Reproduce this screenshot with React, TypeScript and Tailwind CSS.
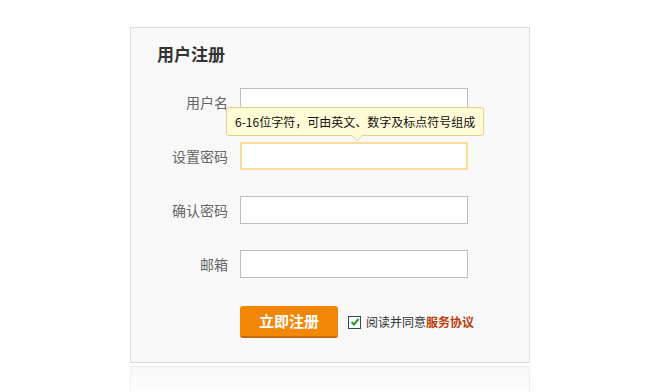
import React from "react";

const font = { fontFamily: '"Noto Sans CJK SC", "Noto Sans", sans-serif' };

function Row({ label, focused, children }: { label: string; focused?: boolean; children?: React.ReactNode }) {
  return (
    <div className="relative flex items-center h-[28px]">
      <div className="w-[97px] text-right text-[14px] text-[#666] leading-[28px]">{label}</div>
      <div
        className={
          focused
            ? "ml-[12px] w-[228px] h-[28px] bg-white border-2 border-[#fbdc97]"
            : "ml-[12px] w-[228px] h-[28px] bg-white border border-[#bdbdbd]"
        }
      />
      {children}
    </div>
  );
}

export default function App() {
  return (
    <div className="w-[650px] h-[392px] bg-white overflow-hidden" style={font}>
      <div className="pt-[27px] pl-[130px]">
        <div className="w-[400px] h-[336px] bg-[#f8f8f8] border border-[#dcdcdc] box-border">
          <div className="pl-[26px] pt-[14px] text-[17px] font-bold text-[#333] leading-[24px]">用户注册</div>
          <div className="mt-[22px] flex flex-col gap-[26px]">
            <Row label="用户名" />
            <Row label="设置密码" focused>
              <div className="absolute left-[95px] top-[-35px] z-10">
                <div className="relative h-[29px] px-[8px] flex items-center bg-[#fefbd6] border border-[#e3cf8c] rounded-[3px] text-[12px] text-[#111] whitespace-nowrap">
                  6-16位字符，可由英文、数字及标点符号组成
                  <div className="absolute left-[124px] bottom-[-6px] w-0 h-0 border-l-[6px] border-r-[6px] border-t-[6px] border-l-transparent border-r-transparent border-t-[#e3cf8c]" />
                  <div className="absolute left-[125px] bottom-[-5px] w-0 h-0 border-l-[5px] border-r-[5px] border-t-[5px] border-l-transparent border-r-transparent border-t-[#fefbd6]" />
                </div>
              </div>
            </Row>
            <Row label="确认密码" />
            <Row label="邮箱" />
          </div>
          <div className="mt-[28px] ml-[109px] flex items-center">
            <button className="w-[98px] h-[32px] rounded-[3px] bg-[#f28705] border-b-2 border-[#c7680a] text-white text-[15px] font-bold flex items-center justify-center">
              立即注册
            </button>
            <div className="ml-[10px] w-[13px] h-[13px] border border-[#2c4b5b] bg-white flex items-center justify-center">
              <svg width="10" height="10" viewBox="0 0 10 10">
                <path d="M1.5 5 L4 7.5 L8.5 2" fill="none" stroke="#2a9a2a" strokeWidth="2" />
              </svg>
            </div>
            <div className="ml-[5px] text-[12px] text-[#333]">
              阅读并同意<span className="font-bold text-[#b8400d]">服务协议</span>
            </div>
          </div>
        </div>
        <div className="mt-[3px] w-[400px] h-[30px] border-x border-t border-[#efefef] bg-gradient-to-b from-[#f7f7f7] to-white" />
      </div>
    </div>
  );
}
